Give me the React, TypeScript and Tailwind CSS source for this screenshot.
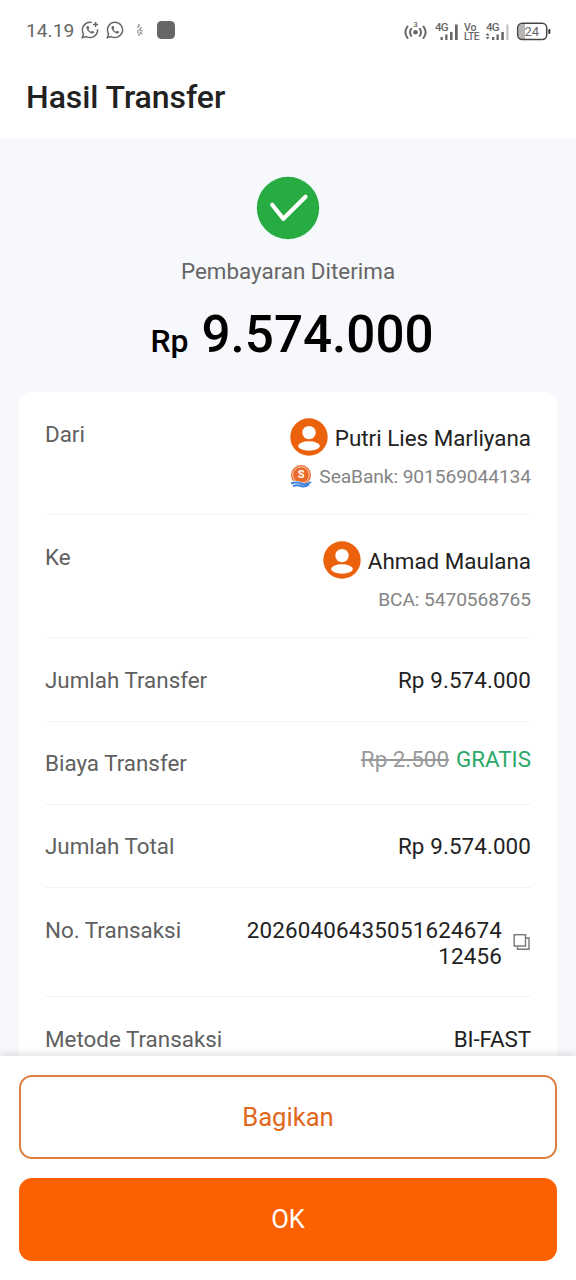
import React from "react";
import { clsx } from "clsx";

const amounts = {
  transfer: "Rp 9.574.000",
  fee: "Rp 2.500",
  total: "Rp 9.574.000",
};

function ChatIcon({ plus = false }: { plus?: boolean }) {
  return (
    <svg width="18" height="18" viewBox="0 0 18 18" fill="none" className="shrink-0">
      <path
        d={
          plus
            ? "M10.6 1.5A7.6 7.6 0 0 0 2.5 12.8L1.3 16.7l4-1.1A7.6 7.6 0 0 0 16.5 8.2"
            : "M9.3 1.3A7.6 7.6 0 0 0 2.6 12.8L1.4 16.7l4-1.1A7.6 7.6 0 1 0 9.3 1.3Z"
        }
        stroke="#666"
        strokeWidth="1.5"
      />
      <path
        d="M6.7 5C5.6 5.2 5.2 6.3 5.6 7.5c.8 2.4 2.7 4.3 5.1 4.9 1.3.3 2.5-.4 2.5-1.6l-2.1-1.1-1.1 1.1C8.7 10.2 8 9.4 7.5 8.2l.8-1L7.5 5Z"
        fill="#666"
      />
      {plus && <path d="M14.6 1v5M12.1 3.5h5" stroke="#666" strokeWidth="1.5" />}
    </svg>
  );
}

function StatusBar() {
  return (
    <div className="flex h-[60px] items-center justify-between pr-[25px] pl-[26px] pt-px text-[#666]">
      <div className="flex items-center">
        <span className="w-[55px] pt-px text-[19.2px]">14.19</span>
        <ChatIcon plus />
        <span className="w-[7px]" />
        <ChatIcon />
        <svg width="8" height="14" viewBox="0 0 8 14" fill="none" className="ml-[12px]">
          <path d="M2 1.5l2 1M1.5 4.5l1.5-1.5M5.5 4L3.5 6.5l3 1.5M2 7v3.5M3.5 10l3 1M2 12.5l2-1M5 8.5l-.5 2" stroke="#888" strokeWidth="1.2" />
        </svg>
        <span className="ml-[13px] h-[18px] w-[18px] rounded-[4.5px] bg-[#666]" />
      </div>
      <svg width="148" height="28" viewBox="403 16 148 28" fill="none">
        {/* hotspot */}
        <g stroke="#666" strokeWidth="2" strokeLinecap="round">
          <path d="M407.5 25.5c-2.6 3.5-2.6 8 0 11.500M411.200 27.800c-1.500 2.200-1.500 4.800 0 7M423.500 25.500c2.600 3.500 2.600 8 0 11.500M419.800 27.800c1.500 2.200 1.500 4.800 0 7" />
        </g>
        <circle cx="415.5" cy="31.3" r="2.3" fill="#666" />
        <g fill="#666" className="font-['Roboto',sans-serif] font-medium">
          <text x="413.3" y="26" fontSize="8">3</text>
          <text x="435" y="30" fontSize="11.5" textLength="13.500">4G</text>
          <text x="464" y="29.5" fontSize="10.5">Vo</text>
          <text x="464" y="39" fontSize="10" textLength="15.5">LTE</text>
          <text x="486" y="30" fontSize="11.5" textLength="13.500">4G</text>
        </g>
        <g fill="#666">
          <rect x="440.5" y="36" width="2.3" height="3" />
          <rect x="445.2" y="33.5" width="2.3" height="5.5" />
          <rect x="450" y="31" width="2.5" height="8" />
          <rect x="455" y="23.5" width="2.7" height="15.5" />
          <path d="M485.6 34.5l2-2.5 2 2.500ZM485.600 36l2 2.500 2-2.500Z" />
          <rect x="492" y="36" width="2.3" height="3" />
          <rect x="496.5" y="33.5" width="2.3" height="5.5" />
          <rect x="501.3" y="31" width="2.5" height="8" />
          <rect x="506.3" y="23.5" width="2.2" height="15.5" fill="#c4c4c4" />
        </g>
        {/* battery */}
        <path d="M522.5 23H525v15h-2.5a4 4 0 0 1-4-4v-7a4 4 0 0 1 4-4Z" fill="#b5b5b5" />
        <rect x="517.7" y="22.2" width="29" height="16.3" rx="4.5" stroke="#444" strokeWidth="1.5" />
        <rect x="548.3" y="28" width="2" height="5" rx="1" fill="#333" />
        <text x="524.5" y="35" fontSize="13" fill="#666" className="font-['Roboto',sans-serif]">24</text>
      </svg>
    </div>
  );
}

function Avatar() {
  return (
    <svg width="38" height="38" viewBox="0 0 38 38" className="shrink-0">
      <circle cx="19" cy="19" r="18.7" fill="#ec620c" />
      <circle cx="19" cy="14.6" r="6.7" fill="#fff" />
      <ellipse cx="19" cy="28" rx="10.9" ry="4.7" fill="#fff" />
    </svg>
  );
}

function SeaBankLogo() {
  return (
    <svg width="22" height="24" viewBox="0 0 22 24" className="-mt-[3px] shrink-0">
      <circle cx="11" cy="11" r="10" fill="#e8692a" />
      <circle cx="11" cy="11" r="8.3" fill="none" stroke="#f9d3b4" strokeWidth="1" />
      <text x="11" y="14.3" textAnchor="middle" fontSize="11" fill="#fff" className="font-['Roboto',sans-serif] font-bold">
        S
      </text>
      <path d="M0 18q5-2.5 11 0t11-1V24H0Z" fill="#fff" />
      <path d="M1 19.5q5-2 10 0t10-1.500M3 22q4-1.500 8 0t8-1.500" fill="none" stroke="#3f82dc" strokeWidth="2" />
    </svg>
  );
}

function Row({ label, className, children }: { label: string; className?: string; children: React.ReactNode }) {
  return (
    <div className={clsx("flex justify-between border-b border-[#f3f3f3] text-[22.4px] leading-[26px]", className)}>
      <span className="text-[#606060]">{label}</span>
      {children}
    </div>
  );
}

function Party({ name, account, logo }: { name: string; account: string; logo?: React.ReactNode }) {
  return (
    <div className="-mt-[3px] flex flex-col items-end">
      <div className="flex h-[38px] items-center gap-[7px]">
        <Avatar />
        <span className="pt-[2px] text-[#222]">{name}</span>
      </div>
      <div className="mt-[8px] flex h-[26px] items-center gap-[7px] text-[19.2px] tracking-[-0.09px] text-[#858585]">
        {logo}
        {account}
      </div>
    </div>
  );
}

export default function App() {
  return (
    <div className="flex h-[1280px] w-[576px] flex-col overflow-hidden bg-white font-['Roboto',sans-serif]">
      <StatusBar />
      <header className="flex h-[78px] shrink-0 items-center pb-1 pl-[26px]">
        <h1 className="text-[32px] font-medium tracking-[-0.06px] text-[#222]">Hasil Transfer</h1>
      </header>

      <main className="flex h-[918px] shrink-0 flex-col overflow-hidden bg-[#f6f8fb] px-[19px]">
        <div className="flex h-[254px] shrink-0 flex-col items-center pt-[38px]">
          <svg width="64" height="64" viewBox="0 0 64 64">
            <circle cx="32" cy="32" r="31.2" fill="#27ab43" />
            <path d="M16.2 28.8L27.3 42.8L49.5 20.8" fill="none" stroke="#fff" strokeWidth="4.2" strokeLinecap="round" strokeLinejoin="round" />
          </svg>
          <p className="mt-[17px] text-[22.4px] leading-[28px] text-[#666]">Pembayaran Diterima</p>
          <p className="mt-[20px] ml-2 flex items-baseline gap-[13px] leading-[60px] font-medium text-black">
            <span className="text-[32px]">Rp</span>
            <span className="text-[51.2px]">9.574.000</span>
          </p>
        </div>

        {/* Transfer details */}
        <section className="shrink-0 rounded-xl bg-white px-[26px]">
          <Row label="Dari" className="h-[123px] pt-[29px]">
            <Party name="Putri Lies Marliyana" account="SeaBank: 901569044134" logo={<SeaBankLogo />} />
          </Row>
          <Row label="Ke" className="h-[123px] pt-[29px]">
            <Party name="Ahmad Maulana" account="BCA: 5470568765" />
          </Row>
          <Row label="Jumlah Transfer" className="h-[84px] items-center pt-px">
            <span className="tracking-[0.1px] text-[#222]">{amounts.transfer}</span>
          </Row>
          <Row label="Biaya Transfer" className="h-[83px] items-center">
            <span className="flex gap-[7px] pb-[8px]">
              <s className="text-[#999] decoration-[1.5px]">{amounts.fee}</s>
              <span className="text-[#2aa868]">GRATIS</span>
            </span>
          </Row>
          <Row label="Jumlah Total" className="h-[83px] items-center">
            <span className="tracking-[0.1px] text-[#222]">{amounts.total}</span>
          </Row>
          <Row label="No. Transaksi" className="h-[109px] pt-[29px]">
            <div className="flex h-[52px] items-center gap-[11px]">
              <span className="w-[260px] text-right tracking-[0.18px] break-all text-[#222]">2026040643505162467412456</span>
              <svg width="18" height="18" viewBox="0 0 18 18" fill="none" stroke="#777" strokeWidth="1.4" className="-mt-[3px]">
                <rect x="1.2" y="1.7" width="11.3" height="11.3" />
                <path d="M13 5h3v11.3H4.5v-3" />
              </svg>
            </div>
          </Row>
          <Row label="Metode Transaksi" className="h-[83px] items-center pt-px">
            <span className="tracking-[-0.1px] text-[#222]">BI-FAST</span>
          </Row>
        </section>
      </main>

      <footer className="relative flex flex-1 flex-col gap-[19px] bg-white px-[19px] pt-[19px] text-[25.6px] shadow-[0_-2px_8px_rgba(0,0,0,0.12)]">
        <button className="h-[84px] rounded-[13px] border-2 border-[#dd7e42] text-[#e0681c]">Bagikan</button>
        <button className="h-[83px] rounded-[13px] bg-[#fd6000] text-white">OK</button>
      </footer>
    </div>
  );
}
